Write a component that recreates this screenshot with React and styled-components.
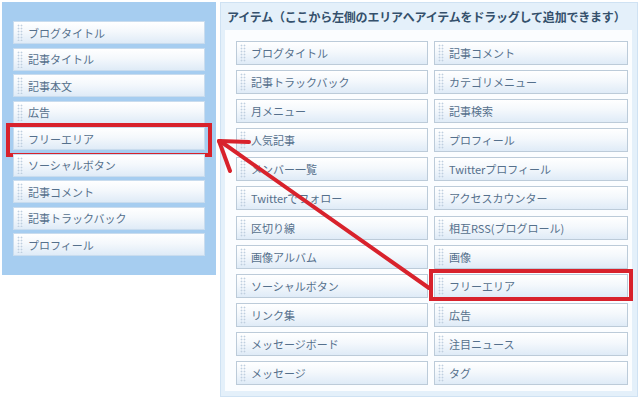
import styled, { createGlobalStyle, css } from "styled-components";

const GlobalStyle = createGlobalStyle`
  html, body {
    margin: 0;
    padding: 0;
    background: #ffffff;
  }
  body {
    font-family: "Noto Sans CJK JP", "Noto Sans", sans-serif;
  }
`;

const leftItems = [
  "ブログタイトル",
  "記事タイトル",
  "記事本文",
  "広告",
  "フリーエリア",
  "ソーシャルボタン",
  "記事コメント",
  "記事トラックバック",
  "プロフィール",
];

const rightItems = [
  "ブログタイトル",
  "記事コメント",
  "記事トラックバック",
  "カテゴリメニュー",
  "月メニュー",
  "記事検索",
  "人気記事",
  "プロフィール",
  "メンバー一覧",
  "Twitterプロフィール",
  "Twitterでフォロー",
  "アクセスカウンター",
  "区切り線",
  "相互RSS(ブログロール)",
  "画像アルバム",
  "画像",
  "ソーシャルボタン",
  "フリーエリア",
  "リンク集",
  "広告",
  "メッセージボード",
  "注目ニュース",
  "メッセージ",
  "タグ",
];

const Page = styled.div`
  position: relative;
  width: 640px;
  height: 399px;
  display: flex;
  align-items: flex-start;
  padding: 2px;
  box-sizing: border-box;
  gap: 4px;
`;

const SidePanel = styled.div`
  width: 214px;
  box-sizing: border-box;
  background: #a6cdf0;
  padding: 19px 11px 19px 11px;
  display: flex;
  flex-direction: column;
  gap: 3.5px;
`;

const ItemsPanel = styled.div`
  width: 418px;
  height: 395px;
  box-sizing: border-box;
  background: #e4f0fa;
  border: 1px solid #cfe2f3;
  display: flex;
  flex-direction: column;
`;

const PanelHeader = styled.div`
  height: 27px;
  padding-left: 6px;
  display: flex;
  align-items: center;
  font-size: 12px;
  font-weight: bold;
  color: #34506c;
  letter-spacing: -0.2px;
  white-space: nowrap;
`;

const ItemGrid = styled.div`
  margin: 0 5px 5px 4px;
  flex: 1;
  background: #fbfdff;
  padding: 11px 4px 4px 11px;
  display: grid;
  grid-template-columns: 192px 194px;
  grid-auto-rows: 24px;
  column-gap: 6px;
  row-gap: 5.1px;
`;

const Item = styled.div`
  position: relative;
  height: ${(p) => (p.$side ? "23px" : "24px")};
  box-sizing: border-box;
  border: 1px solid ${(p) => (p.$side ? "#c9dcee" : "#bccbd9")};
  background: linear-gradient(to bottom, #ffffff 0%, #f4f8fc 45%, #dfebf7 100%);
  display: flex;
  align-items: center;
  padding-left: 14px;
  font-size: 11px;
  color: #55708c;
  white-space: nowrap;

  &::before {
    content: "";
    position: absolute;
    left: 3px;
    top: 2px;
    bottom: 2px;
    width: 6px;
    background-image: radial-gradient(circle, #bfcfdf 0.8px, transparent 1.1px);
    background-size: 3px 3px;
  }

  ${(p) =>
    p.$marked &&
    css`
      &::after {
        content: "";
        position: absolute;
        left: ${p.$side ? "-8px" : "-6px"};
        right: ${p.$side ? "-8px" : "-6px"};
        top: ${p.$side ? "-5px" : "-6px"};
        bottom: ${p.$side ? "-8px" : "-4px"};
        border: 4px solid #d8222c;
        pointer-events: none;
      }
    `}
`;

const ArrowLayer = styled.svg`
  position: absolute;
  left: 0;
  top: 0;
  width: 640px;
  height: 399px;
  pointer-events: none;
`;

export default function App() {
  return (
    <>
      <GlobalStyle />
      <Page>
        <SidePanel>
          {leftItems.map((label) => (
            <Item key={label} $side $marked={label === "フリーエリア"}>
              {label}
            </Item>
          ))}
        </SidePanel>
        <ItemsPanel>
          <PanelHeader>
            アイテム（ここから左側のエリアへアイテムをドラッグして追加できます）
          </PanelHeader>
          <ItemGrid>
            {rightItems.map((label, i) => (
              <Item key={label + i} $marked={i === 17}>
                {label}
              </Item>
            ))}
          </ItemGrid>
        </ItemsPanel>
        <ArrowLayer viewBox="0 0 640 399">
          <g stroke="#d8222c" strokeWidth="4" strokeLinecap="round" fill="none">
            <line x1="429" y1="288" x2="220" y2="141" />
            <line x1="219" y1="141" x2="249" y2="142" />
            <line x1="219" y1="141" x2="230" y2="171" />
          </g>
        </ArrowLayer>
      </Page>
    </>
  );
}
